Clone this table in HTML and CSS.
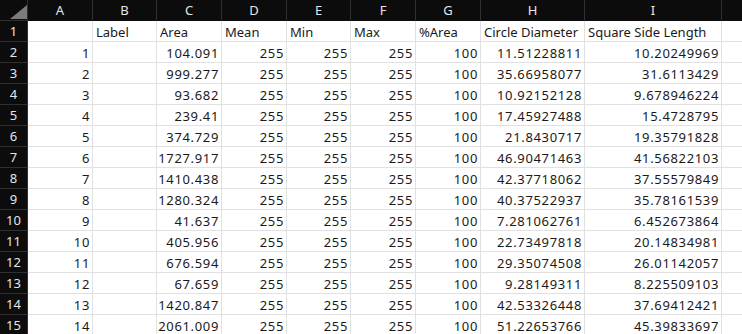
FILE: index.html
```html
<!DOCTYPE html>
<html lang="ko">
<head>
<meta charset="utf-8">
<link rel="stylesheet" href="styles.css">
</head>
<body>
<div class="sheet" id="sheet">
  <div class="hd corner"><svg class="tri" width="17" height="14" viewBox="0 0 17 14"><polygon points="17,0 17,14 0,14" fill="#7b7b7b"/></svg></div>
  <div class="hd col">A</div><div class="hd col">B</div><div class="hd col">C</div><div class="hd col">D</div><div class="hd col">E</div><div class="hd col">F</div><div class="hd col">G</div><div class="hd col">H</div><div class="hd col">I</div><div class="hd col last"></div>

  <div class="hd rn">1</div><div class="c"></div><div class="c">Label</div><div class="c">Area</div><div class="c">Mean</div><div class="c">Min</div><div class="c">Max</div><div class="c">%Area</div><div class="c">Circle Diameter</div><div class="c">Square Side Length</div><div class="c"></div>

  <div class="hd rn">2</div><div class="c n">1</div><div class="c"></div><div class="c n">104.091</div><div class="c n">255</div><div class="c n">255</div><div class="c n">255</div><div class="c n">100</div><div class="c n">11.51228811</div><div class="c n">10.20249969</div><div class="c"></div>
  <div class="hd rn">3</div><div class="c n">2</div><div class="c"></div><div class="c n">999.277</div><div class="c n">255</div><div class="c n">255</div><div class="c n">255</div><div class="c n">100</div><div class="c n">35.66958077</div><div class="c n">31.6113429</div><div class="c"></div>
  <div class="hd rn">4</div><div class="c n">3</div><div class="c"></div><div class="c n">93.682</div><div class="c n">255</div><div class="c n">255</div><div class="c n">255</div><div class="c n">100</div><div class="c n">10.92152128</div><div class="c n">9.678946224</div><div class="c"></div>
  <div class="hd rn">5</div><div class="c n">4</div><div class="c"></div><div class="c n">239.41</div><div class="c n">255</div><div class="c n">255</div><div class="c n">255</div><div class="c n">100</div><div class="c n">17.45927488</div><div class="c n">15.4728795</div><div class="c"></div>
  <div class="hd rn">6</div><div class="c n">5</div><div class="c"></div><div class="c n">374.729</div><div class="c n">255</div><div class="c n">255</div><div class="c n">255</div><div class="c n">100</div><div class="c n">21.8430717</div><div class="c n">19.35791828</div><div class="c"></div>
  <div class="hd rn">7</div><div class="c n">6</div><div class="c"></div><div class="c n">1727.917</div><div class="c n">255</div><div class="c n">255</div><div class="c n">255</div><div class="c n">100</div><div class="c n">46.90471463</div><div class="c n">41.56822103</div><div class="c"></div>
  <div class="hd rn">8</div><div class="c n">7</div><div class="c"></div><div class="c n">1410.438</div><div class="c n">255</div><div class="c n">255</div><div class="c n">255</div><div class="c n">100</div><div class="c n">42.37718062</div><div class="c n">37.55579849</div><div class="c"></div>
  <div class="hd rn">9</div><div class="c n">8</div><div class="c"></div><div class="c n">1280.324</div><div class="c n">255</div><div class="c n">255</div><div class="c n">255</div><div class="c n">100</div><div class="c n">40.37522937</div><div class="c n">35.78161539</div><div class="c"></div>
  <div class="hd rn">10</div><div class="c n">9</div><div class="c"></div><div class="c n">41.637</div><div class="c n">255</div><div class="c n">255</div><div class="c n">255</div><div class="c n">100</div><div class="c n">7.281062761</div><div class="c n">6.452673864</div><div class="c"></div>
  <div class="hd rn">11</div><div class="c n">10</div><div class="c"></div><div class="c n">405.956</div><div class="c n">255</div><div class="c n">255</div><div class="c n">255</div><div class="c n">100</div><div class="c n">22.73497818</div><div class="c n">20.14834981</div><div class="c"></div>
  <div class="hd rn">12</div><div class="c n">11</div><div class="c"></div><div class="c n">676.594</div><div class="c n">255</div><div class="c n">255</div><div class="c n">255</div><div class="c n">100</div><div class="c n">29.35074508</div><div class="c n">26.01142057</div><div class="c"></div>
  <div class="hd rn">13</div><div class="c n">12</div><div class="c"></div><div class="c n">67.659</div><div class="c n">255</div><div class="c n">255</div><div class="c n">255</div><div class="c n">100</div><div class="c n">9.28149311</div><div class="c n">8.225509103</div><div class="c"></div>
  <div class="hd rn">14</div><div class="c n">13</div><div class="c"></div><div class="c n">1420.847</div><div class="c n">255</div><div class="c n">255</div><div class="c n">255</div><div class="c n">100</div><div class="c n">42.53326448</div><div class="c n">37.69412421</div><div class="c"></div>
  <div class="hd rn">15</div><div class="c n">14</div><div class="c"></div><div class="c n">2061.009</div><div class="c n">255</div><div class="c n">255</div><div class="c n">255</div><div class="c n">100</div><div class="c n">51.22653766</div><div class="c n">45.39833697</div><div class="c"></div>
</div>
</body>
</html>
```
FILE: styles.css
```css
html, body {
  margin: 0;
  padding: 0;
  background: #ffffff;
  overflow: hidden;
}
.sheet {
  display: grid;
  grid-template-columns: 28px 65px 64px 65px 65px 64px 65px 65px 104px 137px 40px;
  grid-auto-rows: 21px;
  font-family: "Noto Sans", "Noto Sans CJK KR", sans-serif;
  font-size: 13px;
  color: #1a1a1a;
  width: 742px;
}
.hd {
  box-sizing: border-box;
  background: #0c0c0c;
  color: #e6e6e6;
  border-right: 1px solid #2f2f2f;
  border-bottom: 1px solid #2f2f2f;
  display: flex;
  align-items: center;
  justify-content: center;
  font-size: 13px;
}
.corner {
  position: relative;
}
.tri {
  position: absolute;
  left: 10px;
  top: 5px;
}
.col {
  border-bottom-color: #0c0c0c;
}
.c {
  box-sizing: border-box;
  border-right: 1px solid #e1e1e1;
  border-bottom: 1px solid #e1e1e1;
  padding: 0 3px;
  display: flex;
  align-items: flex-end;
  line-height: 18px;
  white-space: nowrap;
  overflow: hidden;
}
.n {
  justify-content: flex-end;
  letter-spacing: 0.65px;
  padding-right: 2px;
}
```
